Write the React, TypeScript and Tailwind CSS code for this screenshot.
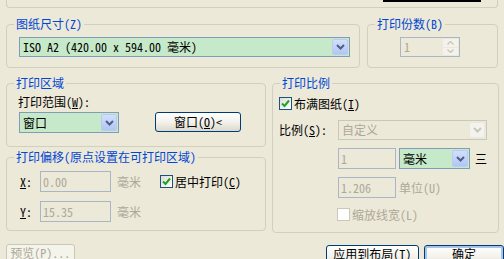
import React from "react";

const FONT = "font-['Noto_Sans_Mono_CJK_SC','Noto_Sans_CJK_SC',sans-serif]";

function Group({
  title,
  className,
  children,
}: {
  title: string;
  className?: string;
  children?: React.ReactNode;
}) {
  return (
    <div className={`relative border border-[#D0D0BF] rounded-[4px] ${className ?? ""}`}>
      <span className="absolute -top-[7px] left-[7px] px-[2px] bg-[#ECE9D8] text-[#0046D5] leading-[12px] whitespace-nowrap">
        {title}
      </span>
      {children}
    </div>
  );
}

function Arrow({ disabled }: { disabled?: boolean }) {
  return (
    <div
      className={`h-full w-[16px] flex items-center justify-center rounded-[2px] border ${
        disabled
          ? "border-[#E8E7E0] bg-[#F3F2EC]"
          : "border-[#B9CAF3] bg-linear-to-b from-[#D2DEFC] to-[#B2C6F4]"
      }`}
    >
      <svg width="9" height="6" viewBox="0 0 9 6">
        <path
          d="M1 1 L4.5 4.5 L8 1"
          fill="none"
          stroke={disabled ? "#C9C7BA" : "#4D6185"}
          strokeWidth="2"
        />
      </svg>
    </div>
  );
}

function Combo({
  text,
  className,
  disabled,
}: {
  text: string;
  className?: string;
  disabled?: boolean;
}) {
  return (
    <div
      className={`flex items-stretch border p-[1px] ${
        disabled ? "border-[#C9C7BA] bg-[#ECE9D8]" : "border-[#7F9DB9] bg-[#C6E9C9]"
      } ${className ?? ""}`}
    >
      <div
        className={`flex-1 flex items-center pl-[2px] whitespace-nowrap ${
          disabled ? "text-[#ACA899]" : "text-black"
        }`}
      >
        {text}
      </div>
      <Arrow disabled={disabled} />
    </div>
  );
}

function Field({ text, className }: { text: string; className?: string }) {
  return (
    <div
      className={`flex items-center pl-[2px] border border-[#A9B6C6] bg-[#ECE9D8] text-[#ACA899] ${
        className ?? ""
      }`}
    >
      {text}
    </div>
  );
}

function Check({ checked, disabled }: { checked?: boolean; disabled?: boolean }) {
  return (
    <div
      className={`w-[13px] h-[13px] shrink-0 flex items-center justify-center border ${
        disabled
          ? "border-[#CAC8BB] bg-white"
          : "border-[#1C5180] bg-linear-to-br from-[#DCDCD7] to-white"
      }`}
    >
      {checked && (
        <svg width="9" height="9" viewBox="0 0 9 9">
          <path d="M1 4.5 L3.5 7 L8 1.5" fill="none" stroke="#21A121" strokeWidth="2" />
        </svg>
      )}
    </div>
  );
}

function Button({
  children,
  className,
  disabled,
  primary,
}: {
  children: React.ReactNode;
  className?: string;
  disabled?: boolean;
  primary?: boolean;
}) {
  return (
    <div
      className={`flex justify-center rounded-[3px] border ${
        disabled
          ? "border-[#C9C7BA] bg-[#F5F4EA] text-[#ACA899]"
          : "border-[#003C74] bg-linear-to-b from-white via-[#F3F2EC] to-[#DCD8CC] text-black"
      } ${primary ? "shadow-[inset_0_0_0_2px_#A8C2EE]" : ""} ${className ?? ""}`}
    >
      {children}
    </div>
  );
}

const U = ({ c }: { c: string }) => <span className="underline underline-offset-1">{c}</span>;

export default function App() {
  return (
    <div
      className={`w-[504px] h-[259px] overflow-hidden bg-[#ECE9D8] text-[12px] leading-[12px] text-black ${FONT}`}
    >
      {/* end of the group above */}
      <div className="ml-[6px] w-[492px] h-[8px] border-x border-b border-[#D0D0BF] rounded-b-[4px] flex">
        <div className="ml-[376px] w-[98px] h-[2px] bg-black" />
      </div>

      {/* paper size + copies */}
      <div className="flex ml-[6px] mt-[16px] gap-[7px]">
        <Group title="图纸尺寸(Z)" className="w-[354px] h-[44px] pt-[12px] pl-[12px]">
          <Combo text="ISO A2 (420.00 x 594.00 毫米)" className="w-[331px] h-[20px]" />
        </Group>
        <Group title="打印份数(B)" className="w-[131px] h-[44px] pt-[12px] pl-[32px]">
          <div className="flex w-[60px] h-[20px] border border-[#A9B6C6] p-[1px]">
            <div className="flex-1 flex items-center pl-[2px] text-[#ACA899]">1</div>
            <div className="w-[15px] flex flex-col gap-[1px]">
              <div className="flex-1 flex items-center justify-center bg-[#F3F2EC]">
                <svg width="7" height="4" viewBox="0 0 7 4">
                  <path d="M0.5 3.5 L3.5 0.5 L6.5 3.5" fill="none" stroke="#C9C7BA" strokeWidth="1.4" />
                </svg>
              </div>
              <div className="flex-1 flex items-center justify-center bg-[#F3F2EC]">
                <svg width="7" height="4" viewBox="0 0 7 4">
                  <path d="M0.5 0.5 L3.5 3.5 L6.5 0.5" fill="none" stroke="#C9C7BA" strokeWidth="1.4" />
                </svg>
              </div>
            </div>
          </div>
        </Group>
      </div>

      {/* plot area / offset / scale */}
      <div className="flex ml-[6px] mt-[15px] gap-[6px]">
        <div className="w-[260px] flex flex-col gap-[10px]">
          <Group title="打印区域" className="h-[64px] pt-[12px] pl-[11px]">
            <div>
              打印范围(<U c="W" />):
            </div>
            <div className="flex items-start mt-[4px] ml-[1px]">
              <Combo text="窗口" className="w-[100px] h-[21px]" />
              <Button className="ml-[36px] w-[86px] h-[20px] items-center">
                窗口(<U c="O" />)&lt;
              </Button>
            </div>
          </Group>
          <Group title="打印偏移(原点设置在可打印区域)" className="h-[74px] pt-[13px] pl-[13px]">
            <div className="flex items-center">
              <span className="w-[20px]">
                <U c="X" />:
              </span>
              <Field text="0.00" className="w-[71px] h-[21px]" />
              <span className="ml-[6px] text-[#ACA899]">毫米</span>
              <span className="ml-[19px]">
                <Check checked />
              </span>
              <span className="ml-[2px]">
                居中打印(<U c="C" />)
              </span>
            </div>
            <div className="flex items-center mt-[9px]">
              <span className="w-[20px]">
                <U c="Y" />:
              </span>
              <Field text="15.35" className="w-[71px] h-[21px]" />
              <span className="ml-[6px] text-[#ACA899]">毫米</span>
            </div>
          </Group>
        </div>

        <Group title="打印比例" className="w-[227px] h-[150px] pt-[13px] pl-[6px]">
          <div className="flex items-center">
            <Check checked />
            <span className="ml-[2px]">
              布满图纸(<U c="I" />)
            </span>
          </div>
          <div className="flex items-center mt-[10px]">
            <span className="w-[59px]">
              比例(<U c="S" />):
            </span>
            <Combo text="自定义" disabled className="w-[149px] h-[20px]" />
          </div>
          <div className="flex items-center mt-[8px] ml-[59px]">
            <Field text="1" className="w-[58px] h-[21px]" />
            <Combo text="毫米" className="ml-[3px] w-[71px] h-[21px]" />
            <span className="ml-[5px]">三</span>
          </div>
          <div className="flex items-center mt-[8px] ml-[59px]">
            <Field text="1.206" className="w-[58px] h-[21px]" />
            <span className="ml-[3px] text-[#ACA899]">单位(U)</span>
          </div>
          <div className="flex items-center mt-[10px] ml-[58px]">
            <Check disabled />
            <span className="ml-[2px] text-[#ACA899]">缩放线宽(L)</span>
          </div>
        </Group>
      </div>

      {/* bottom buttons */}
      <div className="flex items-start ml-[6px] mt-[11px]">
        <Button disabled className="w-[80px] h-[23px] items-start pt-[2px]">
          预览(P)...
        </Button>
        <Button className="ml-[251px] mt-[1px] w-[109px] h-[23px] items-start pt-[2px]">
          应用到布局(<U c="T" />)
        </Button>
        <Button primary className="ml-[5px] mt-[1px] w-[80px] h-[23px] shrink-0 items-start pt-[2px]">
          确定
        </Button>
      </div>
    </div>
  );
}
